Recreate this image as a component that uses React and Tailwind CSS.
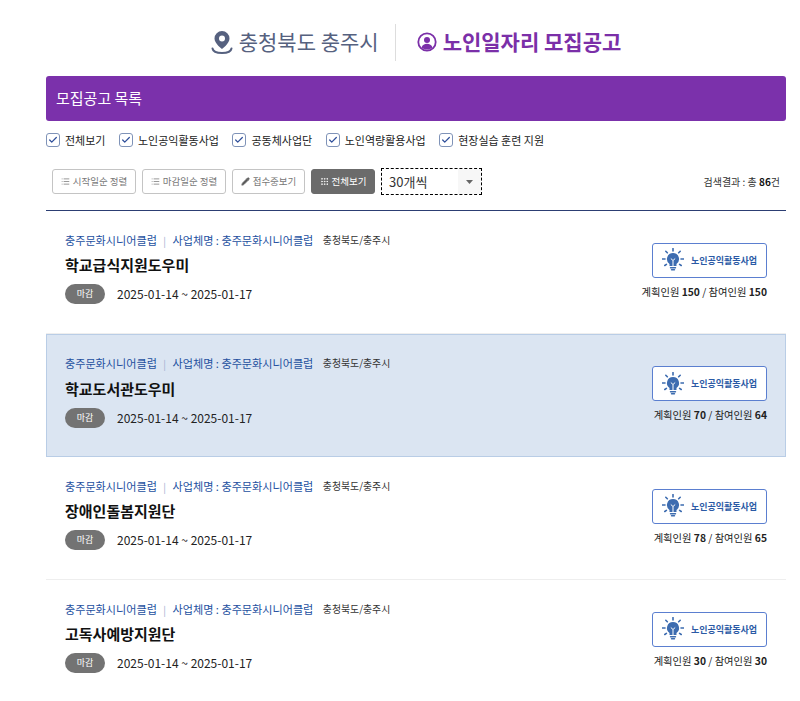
import { Check, List, Pencil, Grip } from 'lucide-react';

const filters = ['전체보기', '노인공익활동사업', '공동체사업단', '노인역량활용사업', '현장실습 훈련 지원'];

const jobs = [
  { title: '학교급식지원도우미', plan: 150, join: 150 },
  { title: '학교도서관도우미', plan: 70, join: 64, active: true },
  { title: '장애인돌봄지원단', plan: 78, join: 65 },
  { title: '고독사예방지원단', plan: 30, join: 30 },
];

function PinIcon() {
  return (
    <svg width="22" height="24" viewBox="0 0 22 24" fill="none">
      <path d="M11 1a7.500 7.500 0 0 0-7.500 7.500C3.500 13.500 11 19 11 19s7.500-5.500 7.500-10.500A7.500 7.500 0 0 0 11 1z" fill="#56617f" />
      <circle cx="11" cy="8.500" r="3" fill="#fff" />
      <path d="M1.500 18.500C2 21.500 6 23 11 23s9-1.500 9.500-4.500" stroke="#56617f" strokeWidth="2" strokeLinecap="round" />
    </svg>
  );
}

function PersonIcon() {
  return (
    <svg width="20" height="20" viewBox="0 0 20 20" fill="none">
      <circle cx="10" cy="10" r="8.700" stroke="#7b2fa8" strokeWidth="1.800" />
      <circle cx="10" cy="8" r="3" fill="#7b2fa8" />
      <path d="M4.500 15.500c.8-2.600 3-3.700 5.500-3.700s4.700 1.100 5.500 3.700C14 17 12 17.600 10 17.600S6 17 4.500 15.500z" fill="#7b2fa8" />
    </svg>
  );
}

function BulbIcon() {
  return (
    <svg width="22" height="24" viewBox="0 0 22 24" fill="none">
      <path d="M11 5a6 6 0 0 0-3.500 10.900V18h7v-2.100A6 6 0 0 0 11 5z" fill="#3d6cb0" />
      <path d="M8.500 19.800h5M9.500 21.800h3" stroke="#3d6cb0" strokeWidth="1.400" strokeLinecap="round" />
      <path d="M8.800 10.500l2.200 2 2.200-2M11 12.500V18" stroke="#fff" strokeWidth="1" />
      <path d="M11 .5v2.500M3.800 3.300l1.500 1.500M18.200 3.300l-1.500 1.500M.5 11H3M19 11h2.500M2.800 17.500l1.600-1.100M19.200 17.500l-1.600-1.100" stroke="#3d6cb0" strokeWidth="1.600" strokeLinecap="round" />
    </svg>
  );
}

function SortButton({ icon, label, dark, width }) {
  return (
    <button className={`flex h-[25px] items-center justify-center gap-[3px] rounded-[3px] border text-[9.500px] ${width} ${dark ? 'border-[#6b6b6b] bg-[#6b6b6b] text-white' : 'border-[#c4c4c4] bg-white text-[#777]'}`}>
      {icon}
      {label}
    </button>
  );
}

function JobRow({ job }) {
  return (
    <div className={`flex h-[123px] items-center justify-between ${job.active ? 'border border-[#b9cde6] bg-[#dbe5f2] px-[18px]' : 'border-b border-[#eeeeee] px-[19px]'}`}>
      <div className="pb-[10px]">
        <div className="flex h-[20px] items-center text-[11.100px]">
          <span className="text-[#23509f]">충주문화시니어클럽</span>
          <span className="mx-[6.500px] text-[10px] text-[#9fb1cf]">|</span>
          <span className="text-[#23509f]">사업체명 : 충주문화시니어클럽</span>
          <span className="ml-[9.500px] text-[9.900px] text-[#333]">충청북도/충주시</span>
        </div>
        <h3 className="mt-[2px] text-[15px] leading-[26px] font-bold text-[#111]">{job.title}</h3>
        <div className="mt-[6px] flex items-center gap-[12px]">
          <span className="flex h-[20px] w-[40px] items-center justify-center rounded-full bg-[#737373] text-[9px] text-white">마감</span>
          <span className="text-[12px] text-[#222]">2025-01-14 ~ 2025-01-17</span>
        </div>
      </div>
      <div className="flex flex-col items-end pb-[2px]">
        <div className="flex h-[35px] w-[115px] items-center justify-center gap-[7px] rounded-[3px] border-[1.500px] border-[#5b7fd0] bg-white text-[9px] font-bold text-[#2b5aa5]">
          <BulbIcon />
          노인공익활동사업
        </div>
        <div className="mt-[6px] text-[10.300px] text-[#222]">
          계획인원 <b>{job.plan}</b> / 참여인원 <b>{job.join}</b>
        </div>
      </div>
    </div>
  );
}

export default function App() {
  return (
    <div className="h-[701px] overflow-hidden bg-white pl-[46px] pr-[14px] font-['Noto_Sans_CJK_KR','Noto_Sans',sans-serif]">
      <div className="flex h-[76px] items-center justify-center pt-[8px]">
        <div className="flex items-center gap-[6px] pr-[16px] text-[21px] text-[#56617f]">
          <PinIcon />
          충청북도 충주시
        </div>
        <div className="h-[37px] w-px bg-[#ddd]" />
        <div className="flex items-center gap-[6px] pl-[21px] text-[21px] font-bold text-[#7b2fa8]">
          <PersonIcon />
          노인일자리 모집공고
        </div>
      </div>

      <div className="flex h-[45px] items-center rounded-[3px] bg-[#7b31ab] pl-[10px] text-[15px] text-white">모집공고 목록</div>

      <div className="mt-[10px] flex h-[18px] items-center gap-[13.500px]">
        {filters.map((f) => (
          <label key={f} className="flex items-center gap-[5px] text-[11px] text-[#222]">
            <span className="flex h-[14px] w-[14px] items-center justify-center rounded-[3px] border border-[#7f93b8]">
              <Check size={10} strokeWidth={3} className="text-[#2f4f9a]" />
            </span>
            {f}
          </label>
        ))}
      </div>

      <div className="mt-[19px] flex h-[27px] items-center">
        <div className="ml-[6px] flex items-center gap-[6px]">
          <SortButton width="w-[84px]" icon={<List size={9} />} label="시작일순 정렬" />
          <SortButton width="w-[84px]" icon={<List size={9} />} label="마감일순 정렬" />
          <SortButton width="w-[73px]" icon={<Pencil size={9} fill="#555" />} label="접수중보기" />
          <SortButton width="w-[64px]" dark icon={<Grip size={9} />} label="전체보기" />
        </div>
        <div className="ml-[6px] flex h-[27px] w-[101px] items-center border border-dashed border-black pl-[7px] text-[13px] text-[#333]">
          <span className="flex-1">30개씩</span>
          <span className="flex h-full w-[23px] items-center justify-center bg-[#f7f7f7]">
            <svg width="7" height="4" viewBox="0 0 7 4"><path d="M0 0h7L3.500 4z" fill="#666" /></svg>
          </span>
        </div>
        <div className="ml-auto pr-[6px] text-[10px] text-[#333]">검색결과 : 총 <b className="text-[#111]">86</b>건</div>
      </div>

      <div className="mt-[15px] border-t border-[#2c3e73]">
        {jobs.map((job) => (
          <JobRow key={job.title} job={job} />
        ))}
      </div>
    </div>
  );
}
